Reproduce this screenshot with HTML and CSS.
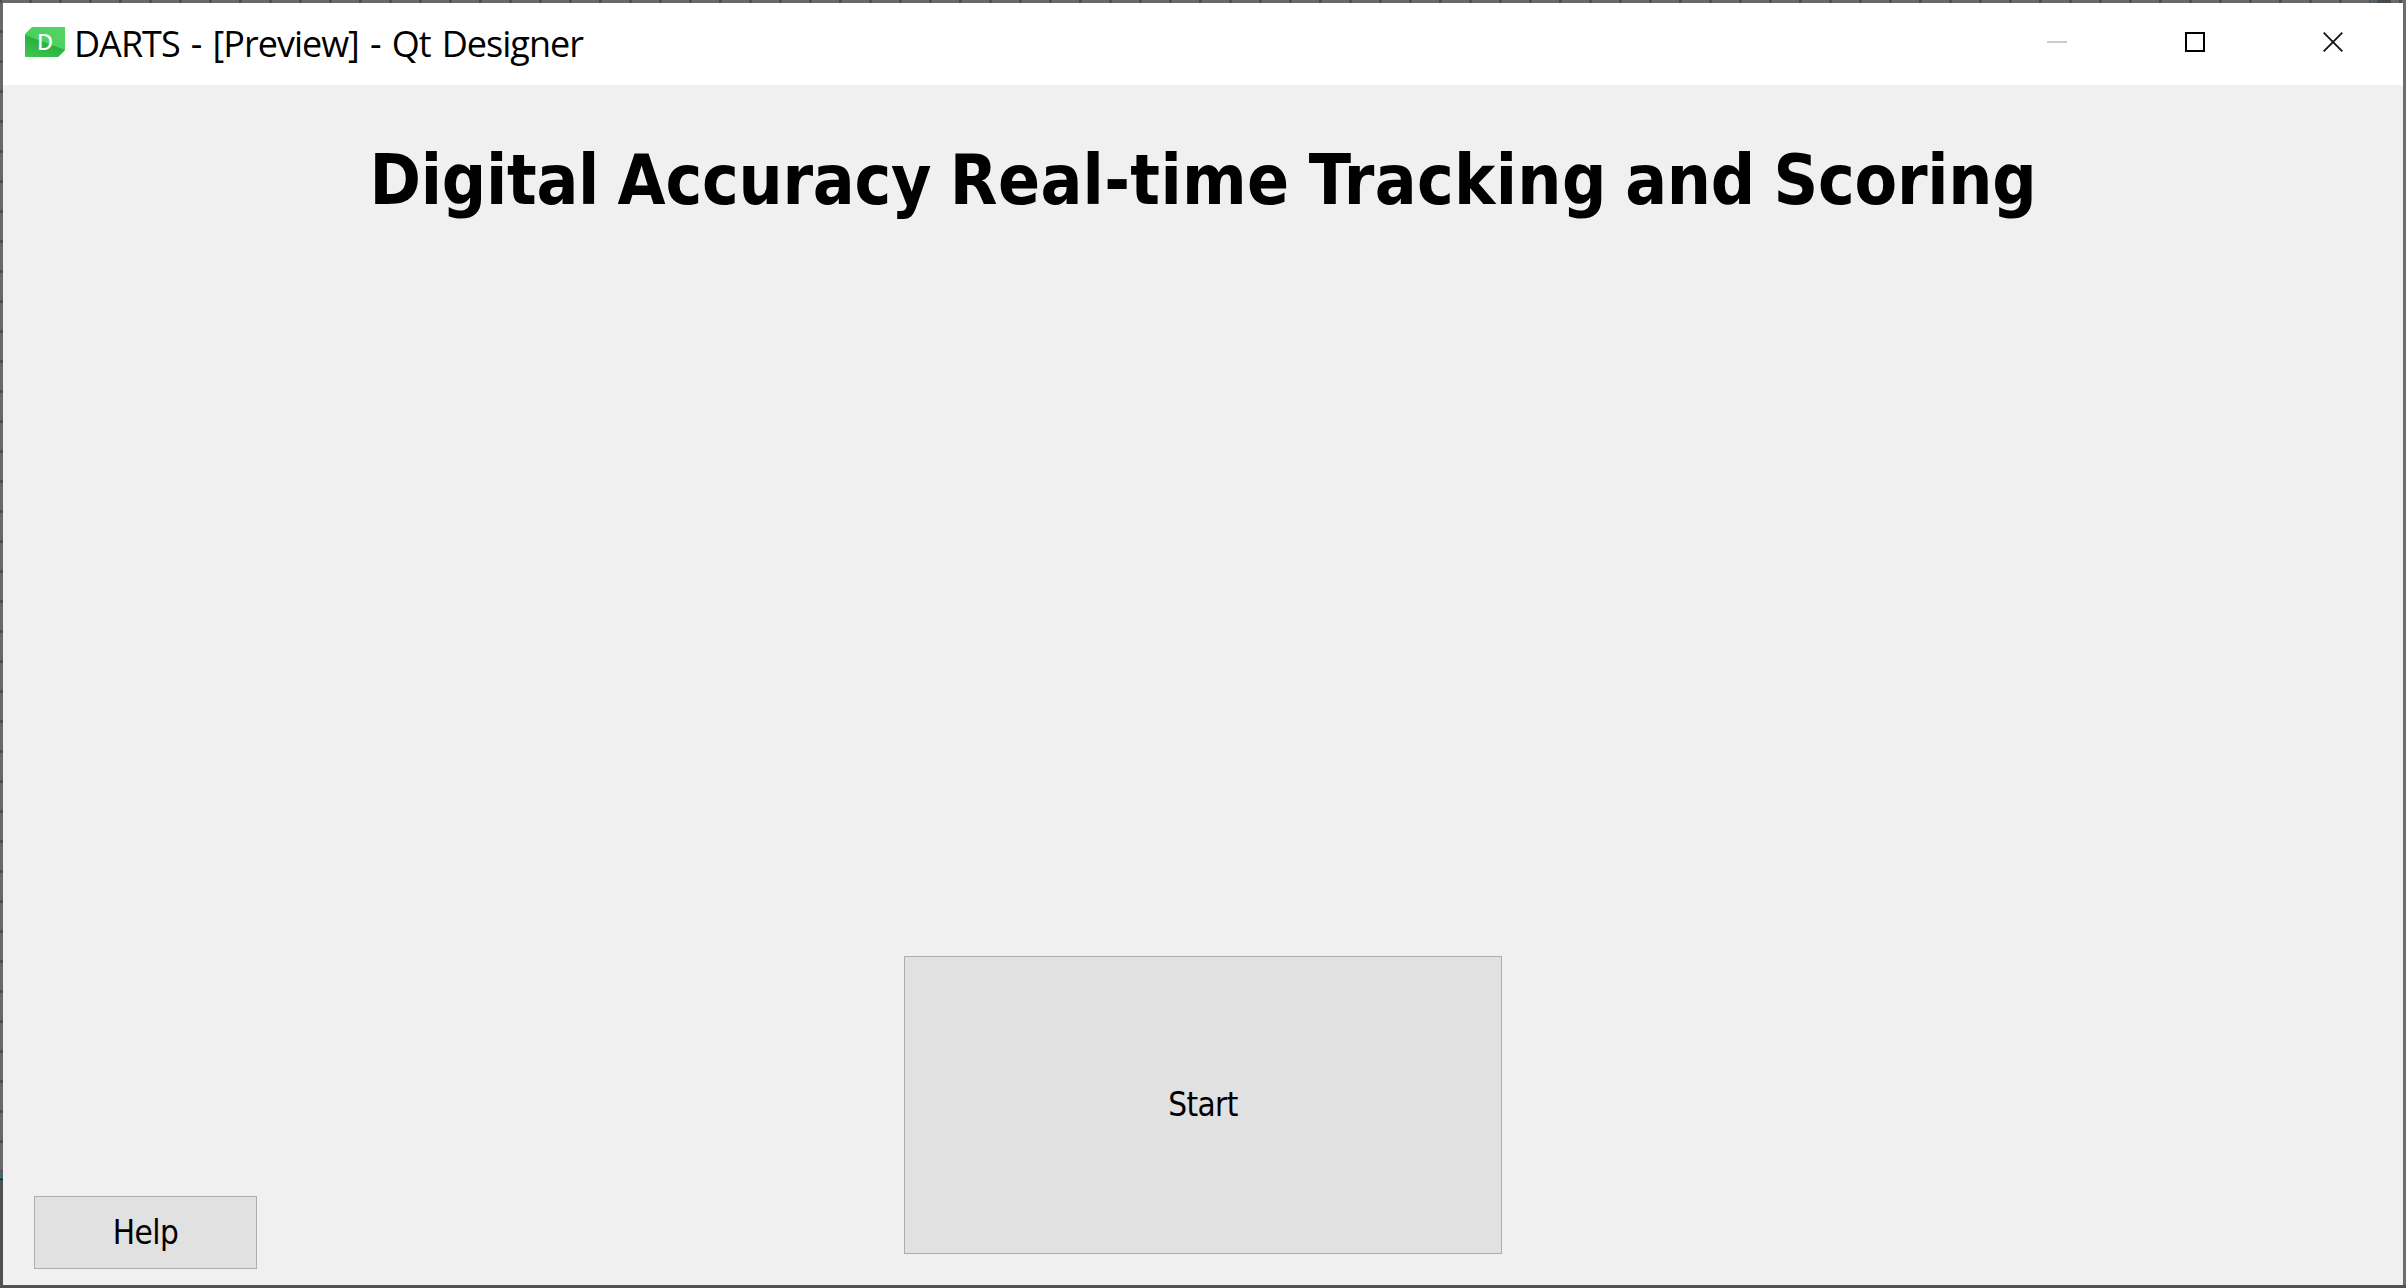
FILE: index.html
```html
<!DOCTYPE html>
<html lang="en">
<head>
<meta charset="utf-8">
<title>DARTS - [Preview] - Qt Designer</title>
<link rel="stylesheet" href="styles.css">
</head>
<body>
<div class="desktop">
  <div class="window">
    <header class="titlebar">
      <svg class="app-icon" width="40" height="30" viewBox="0 0 40 30">
        <defs>
          <linearGradient id="light" x1="1" y1="0" x2="0" y2="1"><stop offset="0" stop-color="#55d566"/><stop offset="1" stop-color="#41cd52"/></linearGradient>
          <linearGradient id="dark" x1="0" y1="1" x2=".7" y2="0"><stop offset="0" stop-color="#3fca50"/><stop offset="1" stop-color="#21a334"/></linearGradient>
        </defs>
        <path d="M7 0H40V23L33 30H0V7Z" fill="url(#light)"/>
        <path d="M0 8L40 23L33 30H0Z" fill="url(#dark)"/>
        <text class="app-letter" x="12" y="23">D</text>
      </svg>
      <span class="caption">DARTS - [Preview] - Qt Designer</span>
      <div class="controls">
        <svg class="control" width="20" height="20"><path d="M0 10H20" stroke="#ccc" stroke-width="2"/></svg>
        <svg class="control" width="20" height="20"><rect x="1" y="1" width="18" height="18" fill="none" stroke="#000" stroke-width="2"/></svg>
        <svg class="control" width="20" height="20"><path d="M.7 .7L19.3 19.3M19.3 .7L.7 19.3" stroke="#111" stroke-width="1.8"/></svg>
      </div>
    </header>
    <main class="form">
      <h1 class="heading">Digital Accuracy <span class="loose">Real-time Tracking</span> and Scoring</h1>
      <button class="button help">Help</button>
      <button class="button start">Start</button>
    </main>
  </div>
</div>
</body>
</html>
```
FILE: styles.css
```css
* { box-sizing: border-box; }
body { margin: 0; }
.desktop {
  width: 2406px;
  height: 1288px;
  padding: 3px;
  background:
    linear-gradient(#6d6d6d, #6d6d6d) 2403px 0 / 3px 1285px no-repeat,
    linear-gradient(#525152, #525152) 0 1285px / 2406px 3px no-repeat,
    linear-gradient(90deg, #566068 7px, #006d7c 7px 8px, #4a4a4a 8px) 2370px 0 / 21px 3px no-repeat,
    linear-gradient(#566068 7px, #005d6a 7px 8px, #222 8px 9px, #505050 9px) 0 1171px / 3px 117px no-repeat,
    linear-gradient(90deg, #4f4f4f 3px, #696969 3px) 29px 0 / 30px 3px repeat-x,
    linear-gradient(#4f4f4f 3px, #696969 3px) 0 0 / 3px 30px repeat-y,
    #696969;
}
.window {
  display: flex;
  flex-direction: column;
  height: 1282px;
  background: #f0f0f0;
}
.titlebar {
  display: flex;
  align-items: flex-start;
  height: 82px;
  padding: 24px 60px 0 22px;
  background: #fff;
}
.app-letter { font: 500 22px "Noto Sans", sans-serif; fill: #fff; }
.caption {
  flex: 1;
  margin: -8px 0 0 9px;
  font: 36px/50px "Open Sans", sans-serif;
  letter-spacing: -1px;
  word-spacing: 2.8px;
  white-space: nowrap;
}
.controls { display: flex; gap: 118px; padding-top: 5px; }
.control { display: block; }
.form {
  flex: 1;
  display: grid;
  grid-template-columns: 223px 1fr 598px 870px;
  grid-template-rows: 1fr 313px;
  padding: 0 31px 16px;
}
.heading {
  grid-column: 1 / -1;
  margin: 50px 0 0;
  font: bold 69px/90px "DejaVu Sans Condensed", "DejaVu Sans", sans-serif;
  font-stretch: condensed;
  letter-spacing: -0.25px;
  word-spacing: -2.8px;
  text-align: center;
  white-space: nowrap;
}
.loose { letter-spacing: 0.35px; }
.button {
  border: 1px solid #adadad;
  padding: 0;
  background: #e1e1e1;
  color: #000;
  font: 33px/40px "DejaVu Sans Condensed", "DejaVu Sans", sans-serif;
  font-stretch: condensed;
  letter-spacing: -0.6px;
}
.help { height: 73px; align-self: end; }
.start { grid-column: 3; height: 298px; align-self: start; }
```
